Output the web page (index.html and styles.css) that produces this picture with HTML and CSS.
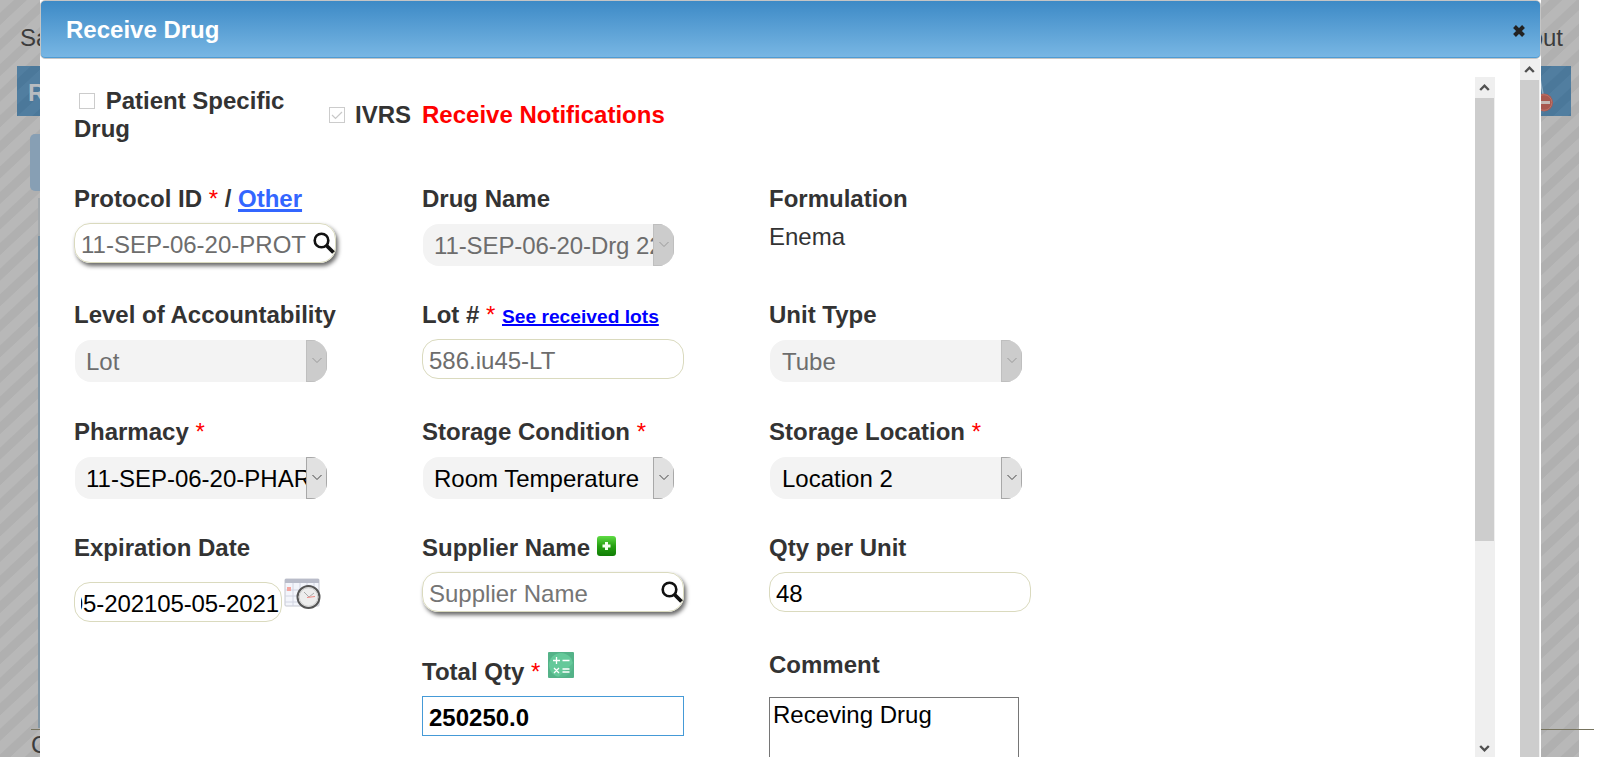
FILE: index.html
```html
<!DOCTYPE html>
<html lang="en">
<head>
<meta charset="utf-8">
<title>Receive Drug</title>
<link rel="stylesheet" href="styles.css">
</head>
<body>
<div class="page">
  <div class="page-top"><span class="page-site">Sa</span><span class="page-out">out</span></div>
  <div class="page-nav"><span>R</span>
    <svg class="stop-icon" width="20" height="40" viewBox="0 0 20 40"><path d="M4 4l4 20" stroke="#8fabc0" stroke-width="1.500"/><circle cx="8" cy="27.500" r="9" fill="#a8584f"/><circle cx="8" cy="27.500" r="7.800" fill="none" stroke="#bd7268" stroke-width="1"/><path d="M2 27.500h12" stroke="#c4bab6" stroke-width="3"/></svg>
  </div>
  <div class="page-tab"></div>
  <div class="page-panel"></div>
  <div class="page-foot">C</div>
</div>
<div class="dialog">
  <div class="titlebar"><h1>Receive Drug</h1>
    <svg width="14" height="14" viewBox="0 0 14 14"><path d="M2.500 2.500l9 9M11.500 2.500l-9 9" stroke="#222" stroke-width="4"/></svg>
  </div>
  <div class="dialog-body">
    <div class="form">
      <div class="checks">
        <div class="check-patient"><span class="box"></span> Patient Specific Drug</div>
        <div class="check-ivrs"><span class="box"><svg width="14" height="14" viewBox="0 0 14 14"><path d="M2 7l3.500 3.500L12 4" fill="none" stroke="#c8c8c8" stroke-width="1.200"/></svg></span>IVRS</div>
        <div class="notice">Receive Notifications</div>
      </div>
      <div class="grid">
        <div class="field"><label>Protocol ID <i>*</i> / <a class="other">Other</a></label><div class="input lookup muted">11-SEP-06-20-PROT<svg class="lens" width="22" height="22" viewBox="0 0 22 22"><circle cx="8.500" cy="8.500" r="6.800" fill="none" stroke="#111" stroke-width="2.600"/><path d="M13 13l7.500 7.500" stroke="#111" stroke-width="3.800"/></svg></div></div>
        <div class="field"><label>Drug Name</label><div class="select narrow muted"><span>11-SEP-06-20-Drg 22</span><b><svg width="10" height="7" viewBox="0 0 10 7"><path d="M.5 1L5 5.500 9.500 1"/></svg></b></div></div>
        <div class="field"><label>Formulation</label><p class="value">Enema</p></div>

        <div class="field"><label>Level of Accountability</label><div class="select muted"><span>Lot</span><b><svg width="10" height="7" viewBox="0 0 10 7"><path d="M.5 1L5 5.500 9.500 1"/></svg></b></div></div>
        <div class="field"><label>Lot # <i>*</i> <a class="lots">See received lots</a></label><div class="input raised muted">586.iu45-LT</div></div>
        <div class="field"><label>Unit Type</label><div class="select wide muted"><span>Tube</span><b><svg width="10" height="7" viewBox="0 0 10 7"><path d="M.5 1L5 5.500 9.500 1"/></svg></b></div></div>

        <div class="field"><label>Pharmacy <i>*</i></label><div class="select"><span>11-SEP-06-20-PHARM</span><b><svg width="10" height="7" viewBox="0 0 10 7"><path d="M.5 1L5 5.500 9.500 1"/></svg></b></div></div>
        <div class="field"><label>Storage Condition <i>*</i></label><div class="select narrow"><span>Room Temperature</span><b><svg width="10" height="7" viewBox="0 0 10 7"><path d="M.5 1L5 5.500 9.500 1"/></svg></b></div></div>
        <div class="field"><label>Storage Location <i>*</i></label><div class="select wide"><span>Location 2</span><b><svg width="10" height="7" viewBox="0 0 10 7"><path d="M.5 1L5 5.500 9.500 1"/></svg></b></div></div>

        <div class="field"><label>Expiration Date</label><div class="date-row"><div class="input raised date"><span>05-202105-05-2021</span></div>
          <svg class="calendar" width="37" height="33" viewBox="0 0 37 33"><rect x="1" y="1" width="34" height="27" rx="1" fill="#f3f5fb" stroke="#c5c7d0"/><path d="M1 1h34v4H1z" fill="#b9bcc9"/><path d="M9 5v23M16 5v23M23 5v23M30 5v23M1 12h34M1 18h34M1 24h34" stroke="#d2d5e2" fill="none"/><rect x="3" y="9" width="4" height="4" fill="#f4a6a0"/><circle cx="24.500" cy="19" r="11" fill="#ededed" stroke="#555" stroke-width="2"/><circle cx="24.500" cy="19" r="9.300" fill="none" stroke="#ccc"/><path d="M20 14l5 5 5-4" stroke="#aaa" fill="none"/><path d="M23 19.500l8-1" stroke="#f08a84"/></svg></div></div>
        <div class="field"><label>Supplier Name <svg class="plus" width="19" height="20" viewBox="0 0 19 20"><defs><linearGradient id="g" x2="0" y2="1"><stop stop-color="#5fdc45"/><stop offset=".5" stop-color="#27a012"/><stop offset="1" stop-color="#107d06"/></linearGradient></defs><rect width="19" height="20" rx="3" fill="url(#g)"/><path d="M9.500 6v8M5.500 10h8" stroke="#f4fff0" stroke-width="3"/></svg></label><div class="input raised lookup placeholder">Supplier Name<svg class="lens" width="22" height="22" viewBox="0 0 22 22"><circle cx="8.500" cy="8.500" r="6.800" fill="none" stroke="#111" stroke-width="2.600"/><path d="M13 13l7.500 7.500" stroke="#111" stroke-width="3.800"/></svg></div></div>
        <div class="field"><label>Qty per Unit</label><div class="input raised">48</div></div>

        <div class="field total"><label>Total Qty <i>*</i> <svg class="calc" width="26" height="26" viewBox="0 0 26 26"><rect width="26" height="26" rx="1" fill="#54b288"/><circle cx="13" cy="13" r="12" fill="#65c99a"/><path d="M16 20l9-9v14H10z" fill="#54b288" opacity=".6"/><path d="M5 8.500h7M8.500 5v7M14.500 8.500h7M6 16l5 5M11 16l-5 5M14.500 17h7M14.500 20h7" stroke="#fff" stroke-width="1.300"/></svg></label><div class="input raised focus">250250.0</div></div>
        <div class="field comment"><label>Comment</label><div class="textarea">Receving Drug</div></div>
      </div>
    </div>
    <div class="scroll inner"><svg width="19" height="21" viewBox="0 0 19 21"><path d="M5.200 13l4.300-4.300 4.300 4.300" fill="none" stroke="#505050" stroke-width="2.400"/></svg><div class="thumb"></div><svg class="down" width="19" height="21" viewBox="0 0 19 21"><path d="M5.200 10l4.300 4.300 4.300-4.300" fill="none" stroke="#505050" stroke-width="2.400"/></svg></div>
    <div class="scroll outer"><svg width="19" height="21" viewBox="0 0 19 21"><path d="M5.200 13l4.300-4.300 4.300 4.300" fill="none" stroke="#505050" stroke-width="2.400"/></svg><div class="thumb"></div></div>
  </div>
</div>
</body>
</html>
```
FILE: styles.css
```css
* { box-sizing: border-box; }
body { margin: 0; width: 1600px; height: 757px; overflow: hidden; position: relative; background: #fff; font: 24px/28px "Liberation Sans", Arial, sans-serif; color: #333; }
svg { display: block; flex: none; }
.page { position: relative; width: 1579px; height: 757px; background: repeating-linear-gradient(137deg, #b8b8b8 0 9px, #b0b0b0 10px 18px, #b8b8b8 18.700px); }
.page-top { display: flex; justify-content: space-between; padding: 24px 16px 0 20px; height: 66px; color: #3c3c3c; }
.page-nav { position: relative; margin: 0 8px 0 17px; height: 50px; padding: 13px 11px; font-weight: bold; color: #b8bcc0; background: repeating-linear-gradient(137deg, #517ea0 0 9px, #4b789a 10px 18px, #517ea0 18.700px); }
.stop-icon { position: absolute; right: 15px; top: 9px; }
.page-tab { width: 40px; height: 57px; margin: 18px 0 0 30px; border-radius: 5px; background: #879fb4; }
.page-panel { width: 20px; height: 530px; margin: 7px 0 0 38px; border-left: 2px solid #7f95a5; border-image: linear-gradient(#a3a9ad 0 40px, #7892a4 40px 130px, #8498a6 130px) 2; }
.page-foot { position: absolute; top: 729px; left: 31px; width: 1563px; border-top: 1px solid #77745f; padding-top: 1px; color: #3c3c3c; }
.dialog { position: absolute; left: 40px; top: 0; width: 1501px; height: 757px; background: #fff; display: flex; flex-direction: column; }
.titlebar { height: 59px; border: 1px solid #c5c5c5; border-radius: 5px; background: linear-gradient(#3d8ac6, #79b7e4); box-shadow: inset 0 -1px #4e9bd3; display: flex; align-items: center; justify-content: space-between; padding: 2px 14px 0 25px; color: #fff; }
h1 { margin: -2px 0 0; font-size: 24px; line-height: 28px; }
.dialog-body { flex: 1; display: flex; min-height: 0; overflow: hidden; }
.form { width: 1435px; padding: 28px 0 0 34px; }
.checks { display: grid; grid-template-columns: 254px 94px 300px; height: 84px; font-weight: bold; }
.box { display: inline-block; width: 16px; height: 16px; border: 1px solid #ccc; vertical-align: 0; }
.check-patient .box { margin: 0 4px 0 5px; }
.check-ivrs { padding-top: 14px; white-space: nowrap; }
.check-ivrs .box { margin: 0 10px 0 1px; }
.notice { padding-top: 14px; color: #f00; }
.grid { display: grid; grid-template-columns: 348px 347px 350px; grid-template-rows: 116px 117px 116px 117px 150px; padding-top: 14px; }
.field { min-width: 0; }
label { display: block; height: 38px; font-weight: bold; white-space: nowrap; }
label i { color: #f00; font-style: normal; font-weight: normal; }
.other { color: #36f; text-decoration: underline 2.500px; }
.lots { color: #00f; font-size: 19.200px; text-decoration: underline 2px; }
.input { position: relative; width: 262px; height: 40px; border: 1px solid #dadabe; border-radius: 16px; padding: 8px 6px 0; color: #000; white-space: nowrap; line-height: 28px; }
.raised, .lookup { padding-top: 7px; }
.lookup { box-shadow: 2px 3px 4px rgba(0,0,0,.6); }
.lens { position: absolute; right: 0; top: 8px; }
.input.muted, .select.muted { color: #6d6d6d; }
.input.placeholder { color: #757575; }
.input.focus { border-color: #459ad7; border-radius: 0; font-weight: bold; }
.select { display: flex; width: 252px; height: 42px; margin: 1px 0 0 1px; border-radius: 16px; overflow: hidden; background: #f3f3f3; color: #000; white-space: nowrap; }
.select.narrow { width: 251px; }
.select span { flex: 1; min-width: 0; overflow: hidden; padding: 8px 0 0 11px; }
.select.wide span { padding-left: 12px; }
.select.narrow.muted span { letter-spacing: -.1px; }
.select b { width: 21px; display: flex; align-items: center; justify-content: center; background: #e1e1e1; border: 1px solid #a8a8a8; padding-bottom: 2px; }
.select.muted b { background: #ccc; border-color: #bfbfbf; }
.select path { fill: none; stroke: #444; }
.select.muted path { stroke: #999; }
.value { margin: 0; }
.date-row { display: flex; gap: 2px; padding-top: 5px; }
.date { width: 208px; margin-top: 5px; }
.date span { display: flex; justify-content: flex-end; width: 198px; overflow: hidden; letter-spacing: -.1px; }
.calendar { margin-top: 1px; }
.plus, .calc { display: inline-block; }
.plus { vertical-align: 0; }
.total { grid-column: 2; padding-top: 1px; }
.total label { height: 44px; }
.calc { vertical-align: 2px; margin-left: 1px; }
.comment label { height: 46px; }
.textarea { width: 250px; height: 90px; border: 1px solid #767676; padding: 3px; color: #000; }
.scroll { background: #efefef; display: flex; flex-direction: column; }
.inner { width: 20px; margin-top: 18px; }
.outer { width: 20px; margin-left: 25px; }
.thumb { width: 19px; background: #cdcdcd; }
.inner .thumb { height: 443px; }
.outer .thumb { flex: 1; }
.down { margin-top: auto; }
```
